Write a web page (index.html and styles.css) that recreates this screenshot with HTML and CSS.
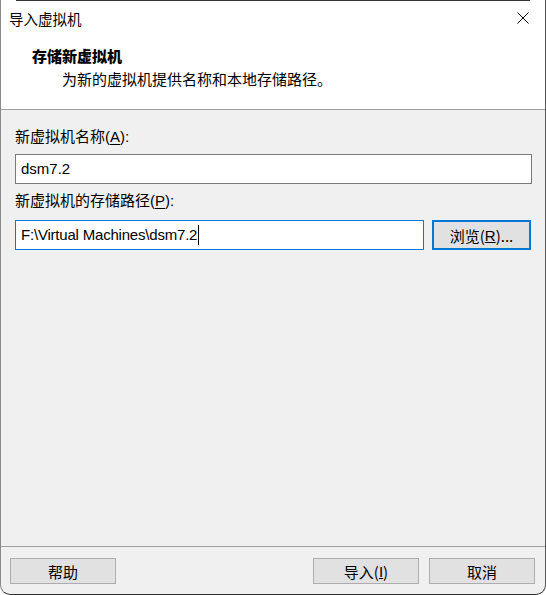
FILE: index.html
```html
<!DOCTYPE html>
<html lang="zh-CN">
<head>
<meta charset="utf-8">
<title>导入虚拟机</title>
<link rel="stylesheet" href="styles.css">
</head>
<body>
<div class="window">
  <div class="topshadow"></div>
  <div class="titlebar">
    <span class="title">导入虚拟机</span>
    <svg class="close" width="12" height="12" viewBox="0 0 12 12"><path d="M0.5 0.5 L11.5 11.5 M11.5 0.5 L0.5 11.5" stroke="#000" stroke-width="1" fill="none"/></svg>
  </div>
  <div class="header">
    <div class="heading">存储新虚拟机</div>
    <div class="subtitle">为新的虚拟机提供名称和本地存储路径。</div>
  </div>
  <div class="content">
    <div class="label">新虚拟机名称(<u>A</u>):</div>
    <div class="input">dsm7.2</div>
    <div class="label label2">新虚拟机的存储路径(<u>P</u>):</div>
    <div class="row">
      <div class="input focus">F:\Virtual Machines\dsm7.2<span class="caret"></span></div>
      <div class="btn browse">浏览(<u>R</u>)...</div>
    </div>
  </div>
  <div class="footer">
    <div class="btn">帮助</div>
    <div class="spacer"></div>
    <div class="btn">导入(<u>I</u>)</div>
    <div class="btn">取消</div>
  </div>
</div>
</body>
</html>
```
FILE: styles.css
```css
html, body {
  margin: 0;
  padding: 0;
  background: #ffffff;
}
body {
  font-family: "Liberation Sans", "Noto Sans CJK SC", sans-serif;
  font-size: 15px;
  color: #000;
}
.window {
  position: relative;
  width: 546px;
  height: 595px;
  box-sizing: border-box;
  display: flex;
  flex-direction: column;
  background: #f0f0f0;
  border-left: 1px solid #8a8a8a;
  border-right: 1px solid #555;
  border-bottom: 1px solid #333;
  border-radius: 0 0 10px 10px;
  overflow: hidden;
}
.topshadow {
  position: absolute;
  top: 0;
  left: 15px;
  right: 15px;
  height: 1px;
  background: #333;
}
.titlebar {
  height: 34px;
  background: #fff;
  display: flex;
  align-items: center;
  justify-content: space-between;
  padding: 2px 16px 0 9px;
  box-sizing: border-box;
  margin-left: -1px;
}
.title {
  font-family: "Noto Sans CJK SC", sans-serif;
  font-size: 14.5px;
}
.close {
  display: block;
}
.header {
  height: 75px;
  background: #fff;
  border-bottom: 1px solid #a0a0a0;
  box-sizing: content-box;
  padding-left: 32px;
  margin-left: -1px;
}
.heading {
  font-family: "Noto Sans CJK SC", sans-serif;
  font-weight: 900;
  font-size: 15px;
  line-height: 20px;
  margin-top: 12px;
}
.subtitle {
  font-family: "Noto Sans CJK SC", sans-serif;
  font-size: 15px;
  line-height: 20px;
  margin-top: 3px;
  padding-left: 30px;
}
.content {
  flex: 1;
  padding: 17px 14px 0 14px;
  display: flex;
  flex-direction: column;
}
.label {
  line-height: 20px;
  height: 20px;
  margin-bottom: 7px;
}
.label2 {
  margin-top: 7px;
  margin-bottom: 9px;
}
.label u {
  text-underline-offset: 2px;
}
.input {
  height: 30px;
  box-sizing: border-box;
  border: 1px solid #7a7a7a;
  background: #fff;
  padding: 0 5px;
  line-height: 28px;
  width: 517px;
}
.input.focus {
  border-color: #0078d7;
  width: 409px;
  display: flex;
  align-items: center;
  letter-spacing: -0.2px;
}
.caret {
  display: inline-block;
  width: 1px;
  height: 20px;
  background: #000;
  margin-left: 1px;
}
.row {
  display: flex;
  gap: 8px;
}
.btn {
  width: 106px;
  height: 26px;
  box-sizing: border-box;
  border: 1px solid #adadad;
  background: #e1e1e1;
  display: flex;
  align-items: center;
  justify-content: center;
  font-family: "Noto Sans CJK SC", sans-serif;
  font-size: 15px;
}
.btn u {
  font-family: "Liberation Sans", sans-serif;
}
.browse {
  width: 99px;
  height: 30px;
  border: 2px solid #0078d7;
}
.footer {
  height: 48px;
  border-top: 1px solid #a0a0a0;
  display: flex;
  align-items: flex-start;
  padding: 11px 10px 0 9px;
  box-sizing: border-box;
  gap: 10px;
}
.spacer {
  flex: 1;
}
```
